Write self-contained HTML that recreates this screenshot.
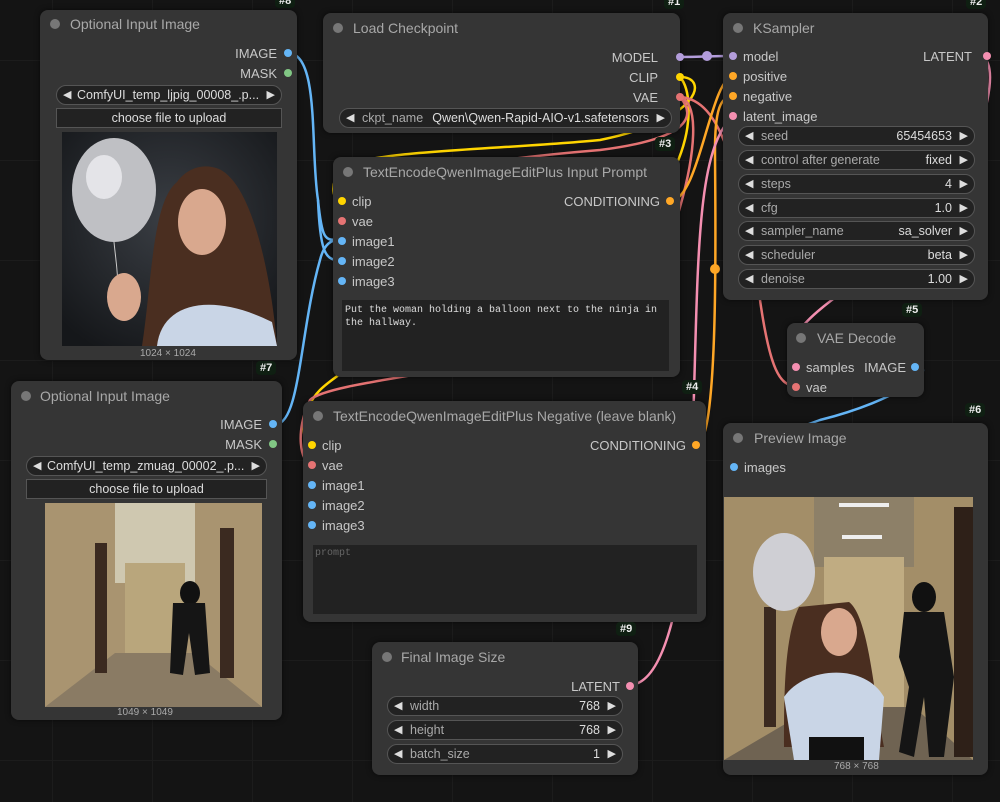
<!DOCTYPE html>
<html><head><meta charset="utf-8"><style>
*{margin:0;padding:0;box-sizing:border-box}
body{width:1000px;height:802px;overflow:hidden;background:#141414;font-family:"Liberation Sans",sans-serif;font-size:13px;color:#c8c8c8;position:relative;
background-image:linear-gradient(#1c1c1c 1px,transparent 1px),linear-gradient(90deg,#1c1c1c 1px,transparent 1px);background-size:100px 100px;background-position:-48px -40px}
.node{position:absolute;background:#353535;border-radius:8px;box-shadow:0 0 6px rgba(0,0,0,.6)}
.tt{position:absolute;color:#a8a8a8;font-size:14px;white-space:nowrap}
.dot{position:absolute;width:10px;height:10px;border-radius:50%;background:#777}
.a{position:absolute;white-space:nowrap}
.s{position:absolute;width:8px;height:8px;border-radius:50%}
.w{position:absolute;height:20px;background:#222;border:1px solid #555;border-radius:10px;color:#ccc;font-size:12.5px}
.w .l{position:absolute;left:22px;top:2px;color:#aaa}
.w .v{position:absolute;right:22px;top:2px;color:#ddd}
.w:before{content:"◀";position:absolute;left:6px;top:2px;font-size:11px;color:#ddd}
.w:after{content:"▶";position:absolute;right:6px;top:2px;font-size:11px;color:#ddd}
.btn{position:absolute;height:20px;background:#222;border:1px solid #555;color:#ddd;text-align:center;font-size:12.5px;line-height:18px}
.badge{position:absolute;background:#0f1f12;color:#eee;font-size:11px;font-weight:bold;padding:1px 4px;border-radius:4px}
.cap{position:absolute;font-size:10px;color:#aaa}
</style></head><body>

<svg width="1000" height="802" style="position:absolute;left:0;top:0" fill="none" stroke-width="2.5">
<path d="M288 53 C320 53 310 150 318 200 C322 240 325 240 338 240" stroke="#64b5f6"/>
<path d="M318 200 C320 250 325 260 338 260" stroke="#64b5f6"/>
<path d="M276 424 C300 424 300 330 320 260 C325 240 335 240 338 240" stroke="#64b5f6"/>
<path d="M916 367 C940 367 900 400 820 420 C760 440 740 466 734 466" stroke="#64b5f6"/>
<path d="M680 57 C705 57 705 56 734 56" stroke="#b39ddb"/>
<path d="M680 77 C710 77 700 120 600 140 C500 150 360 150 340 170 C330 185 332 201 342 201" stroke="#ffd500"/>
<path d="M680 77 C700 100 690 200 600 240 C450 300 340 370 320 390 C300 410 300 444 312 444" stroke="#ffd500"/>
<path d="M680 97 C700 120 680 140 600 150 C480 160 350 180 340 200 C335 215 338 221 342 221" stroke="#e57373"/>
<path d="M680 97 C720 110 660 300 620 330 C500 370 330 380 310 400 C295 430 300 464 312 464" stroke="#e57373"/>
<path d="M680 97 C730 100 740 200 760 300 C770 370 780 386 796 386" stroke="#e57373"/>
<path d="M670 201 C700 201 710 76 734 76" stroke="#ffa726"/>
<path d="M697 444 C720 444 715 200 715 150 C715 110 720 96 734 96" stroke="#ffa726"/>
<path d="M629 685 C660 685 680 620 690 500 C700 300 690 150 734 116" stroke="#f48fb1" />
<path d="M980 56 C1000 60 990 120 950 200 C900 260 820 300 800 330 C790 350 790 367 796 367" stroke="#f48fb1"/>
<circle cx="715" cy="269" r="5" fill="#ffa726" stroke="none"/>
<circle cx="707" cy="56" r="5" fill="#b39ddb" stroke="none"/>
</svg>

<!-- Node #8 -->
<div class="badge" style="left:275px;top:-6px">#8</div>
<div class="node" style="left:40px;top:10px;width:257px;height:350px">
<div class="dot" style="left:10px;top:9px"></div><div class="tt" style="left:30px;top:6px">Optional Input Image</div>
<div class="a" style="right:20px;top:36px">IMAGE</div><div class="s" style="right:5px;top:39px;background:#64b5f6"></div>
<div class="a" style="right:20px;top:56px">MASK</div><div class="s" style="right:5px;top:59px;background:#81c784"></div>
<div class="w" style="left:16px;top:75px;width:226px"><span class="l" style="color:#ddd;left:20px">ComfyUI_temp_ljpig_00008_.p...</span></div>
<div class="btn" style="left:16px;top:98px;width:226px">choose file to upload</div>
<svg style="position:absolute;left:22px;top:122px" width="215" height="214"><defs><radialGradient id="bg" cx="0.5" cy="0.4" r="0.7"><stop offset="0" stop-color="#3a3e44"/><stop offset="1" stop-color="#15171a"/></radialGradient></defs>
<rect width="215" height="214" fill="url(#bg)"/>
<path d="M115 50 C90 70 90 150 80 214 L215 214 C210 150 190 40 150 35 C135 32 122 40 115 50Z" fill="#4a2e20"/>
<path d="M95 214 C100 170 150 160 210 190 L215 214Z" fill="#c9d5e6"/>
<ellipse cx="140" cy="90" rx="24" ry="33" fill="#d9a88e"/>
<ellipse cx="52" cy="58" rx="42" ry="52" fill="#bfc0c4"/><ellipse cx="42" cy="45" rx="18" ry="22" fill="#e4e4e8"/>
<path d="M52 110 C54 130 56 140 56 160" stroke="#ccc"/>
<ellipse cx="62" cy="165" rx="17" ry="24" fill="#d9a88e"/></svg>
<div class="cap" style="left:100px;top:338px">1024 × 1024</div>
</div>

<!-- Load Checkpoint #1 -->
<div class="badge" style="left:664px;top:-5px">#1</div>
<div class="node" style="left:323px;top:13px;width:357px;height:120px">
<div class="dot" style="left:10px;top:10px"></div><div class="tt" style="left:30px;top:7px">Load Checkpoint</div>
<div class="a" style="right:22px;top:37px">MODEL</div><div class="s" style="right:-4px;top:40px;background:#b39ddb"></div>
<div class="a" style="right:22px;top:57px">CLIP</div><div class="s" style="right:-4px;top:60px;background:#ffd500"></div>
<div class="a" style="right:22px;top:77px">VAE</div><div class="s" style="right:-4px;top:80px;background:#e57373"></div>
<div class="w" style="left:16px;top:95px;width:333px"><span class="l">ckpt_name</span><span class="v">Qwen\Qwen-Rapid-AIO-v1.safetensors</span></div>
</div>

<!-- KSampler #2 -->
<div class="badge" style="left:966px;top:-5px">#2</div>
<div class="node" style="left:723px;top:13px;width:265px;height:287px">
<div class="dot" style="left:10px;top:10px"></div><div class="tt" style="left:30px;top:7px">KSampler</div>
<div class="s" style="left:6px;top:39px;background:#b39ddb"></div><div class="a" style="left:20px;top:36px">model</div>
<div class="s" style="left:6px;top:59px;background:#ffa726"></div><div class="a" style="left:20px;top:56px">positive</div>
<div class="s" style="left:6px;top:79px;background:#ffa726"></div><div class="a" style="left:20px;top:76px">negative</div>
<div class="s" style="left:6px;top:99px;background:#f48fb1"></div><div class="a" style="left:20px;top:96px">latent_image</div>
<div class="a" style="right:16px;top:36px">LATENT</div><div class="s" style="right:-3px;top:39px;background:#f48fb1"></div>
<div class="w" style="left:15px;top:113px;width:237px"><span class="l">seed</span><span class="v">65454653</span></div>
<div class="w" style="left:15px;top:137px;width:237px"><span class="l">control after generate</span><span class="v">fixed</span></div>
<div class="w" style="left:15px;top:161px;width:237px"><span class="l">steps</span><span class="v">4</span></div>
<div class="w" style="left:15px;top:185px;width:237px"><span class="l">cfg</span><span class="v">1.0</span></div>
<div class="w" style="left:15px;top:208px;width:237px"><span class="l">sampler_name</span><span class="v">sa_solver</span></div>
<div class="w" style="left:15px;top:232px;width:237px"><span class="l">scheduler</span><span class="v">beta</span></div>
<div class="w" style="left:15px;top:256px;width:237px"><span class="l">denoise</span><span class="v">1.00</span></div>
</div>

<!-- TextEncode #3 -->
<div class="badge" style="left:655px;top:137px">#3</div>
<div class="node" style="left:333px;top:157px;width:347px;height:220px">
<div class="dot" style="left:10px;top:10px"></div><div class="tt" style="left:30px;top:7px">TextEncodeQwenImageEditPlus Input Prompt</div>
<div class="s" style="left:5px;top:40px;background:#ffd500"></div><div class="a" style="left:19px;top:37px">clip</div>
<div class="s" style="left:5px;top:60px;background:#e57373"></div><div class="a" style="left:19px;top:57px">vae</div>
<div class="s" style="left:5px;top:80px;background:#64b5f6"></div><div class="a" style="left:19px;top:77px">image1</div>
<div class="s" style="left:5px;top:100px;background:#64b5f6"></div><div class="a" style="left:19px;top:97px">image2</div>
<div class="s" style="left:5px;top:120px;background:#64b5f6"></div><div class="a" style="left:19px;top:117px">image3</div>
<div class="a" style="right:20px;top:37px">CONDITIONING</div><div class="s" style="right:6px;top:40px;background:#ffa726"></div>
<div style="position:absolute;left:9px;top:143px;width:327px;height:71px;background:#222;font-family:'Liberation Mono',monospace;font-size:10px;color:#ddd;padding:4px 3px;line-height:13px">Put the woman holding a balloon next to the ninja in the hallway.</div>
</div>

<!-- Optional #7 -->
<div class="badge" style="left:256px;top:361px">#7</div>
<div class="node" style="left:11px;top:381px;width:271px;height:339px">
<div class="dot" style="left:10px;top:10px"></div><div class="tt" style="left:29px;top:7px">Optional Input Image</div>
<div class="a" style="right:20px;top:36px">IMAGE</div><div class="s" style="right:5px;top:39px;background:#64b5f6"></div>
<div class="a" style="right:20px;top:56px">MASK</div><div class="s" style="right:5px;top:59px;background:#81c784"></div>
<div class="w" style="left:15px;top:75px;width:241px"><span class="l" style="color:#ddd;left:20px">ComfyUI_temp_zmuag_00002_.p...</span></div>
<div class="btn" style="left:15px;top:98px;width:241px">choose file to upload</div>
<svg style="position:absolute;left:34px;top:122px" width="217" height="204"><rect width="217" height="204" fill="#a99470"/><rect x="70" y="0" width="80" height="80" fill="#cfc8b0"/><rect x="80" y="60" width="60" height="110" fill="#b9a67c"/>
<path d="M0 204 L70 150 L150 150 L217 204Z" fill="#8a7b64"/><rect x="50" y="40" width="12" height="130" fill="#3b2a20"/><rect x="175" y="25" width="14" height="150" fill="#3b2a20"/>
<ellipse cx="145" cy="90" rx="10" ry="12" fill="#111"/><path d="M128 100 L160 100 L165 170 L150 172 L144 130 L138 172 L125 170Z" fill="#151515"/></svg>
<div class="cap" style="left:106px;top:326px">1049 × 1049</div>
</div>

<!-- Negative #4 -->
<div class="badge" style="left:682px;top:380px">#4</div>
<div class="node" style="left:303px;top:401px;width:403px;height:221px">
<div class="dot" style="left:10px;top:10px"></div><div class="tt" style="left:30px;top:7px">TextEncodeQwenImageEditPlus Negative (leave blank)</div>
<div class="s" style="left:5px;top:40px;background:#ffd500"></div><div class="a" style="left:19px;top:37px">clip</div>
<div class="s" style="left:5px;top:60px;background:#e57373"></div><div class="a" style="left:19px;top:57px">vae</div>
<div class="s" style="left:5px;top:80px;background:#64b5f6"></div><div class="a" style="left:19px;top:77px">image1</div>
<div class="s" style="left:5px;top:100px;background:#64b5f6"></div><div class="a" style="left:19px;top:97px">image2</div>
<div class="s" style="left:5px;top:120px;background:#64b5f6"></div><div class="a" style="left:19px;top:117px">image3</div>
<div class="a" style="right:20px;top:37px">CONDITIONING</div><div class="s" style="right:6px;top:40px;background:#ffa726"></div>
<div style="position:absolute;left:10px;top:144px;width:384px;height:69px;background:#222;font-family:'Liberation Mono',monospace;font-size:10px;color:#666;padding:3px 2px">prompt</div>
</div>

<!-- VAE Decode #5 -->
<div class="badge" style="left:902px;top:303px">#5</div>
<div class="node" style="left:787px;top:323px;width:137px;height:74px">
<div class="dot" style="left:9px;top:10px"></div><div class="tt" style="left:30px;top:7px">VAE Decode</div>
<div class="s" style="left:5px;top:40px;background:#f48fb1"></div><div class="a" style="left:19px;top:37px">samples</div>
<div class="s" style="left:5px;top:60px;background:#e57373"></div><div class="a" style="left:19px;top:57px">vae</div>
<div class="a" style="right:18px;top:37px">IMAGE</div><div class="s" style="right:5px;top:40px;background:#64b5f6"></div>
</div>

<!-- Preview #6 -->
<div class="badge" style="left:965px;top:403px">#6</div>
<div class="node" style="left:723px;top:423px;width:265px;height:352px">
<div class="dot" style="left:10px;top:10px"></div><div class="tt" style="left:31px;top:7px">Preview Image</div>
<div class="s" style="left:7px;top:40px;background:#64b5f6"></div><div class="a" style="left:21px;top:37px">images</div>
<svg style="position:absolute;left:1px;top:74px" width="249" height="263"><rect width="249" height="263" fill="#a38e68"/><rect x="90" y="0" width="100" height="70" fill="#8d8068"/><rect x="100" y="60" width="80" height="160" fill="#c0ac82"/>
<path d="M0 263 L90 210 L190 210 L249 263Z" fill="#6f6352"/><rect x="40" y="110" width="12" height="120" fill="#3b2a20"/><rect x="230" y="10" width="19" height="250" fill="#2e2018"/>
<rect x="115" y="6" width="50" height="4" fill="#eee"/><rect x="118" y="38" width="40" height="4" fill="#eee"/>
<ellipse cx="60" cy="75" rx="31" ry="39" fill="#cfcfd4"/><path d="M75 110 C60 140 60 200 60 250 L160 250 C150 200 145 120 125 105Z" fill="#4a2e20"/>
<ellipse cx="115" cy="135" rx="18" ry="24" fill="#d9a88e"/><path d="M60 200 C80 170 140 165 160 200 L155 263 L70 263Z" fill="#c9d5e6"/><rect x="85" y="240" width="55" height="23" fill="#111"/>
<ellipse cx="200" cy="100" rx="12" ry="15" fill="#111"/><path d="M180 115 L220 115 L230 180 L220 260 L205 260 L200 200 L190 260 L175 255 L185 190 L175 160Z" fill="#151515"/></svg>
<div class="cap" style="left:111px;top:338px">768 × 768</div>
</div>

<!-- Final Image Size #9 -->
<div class="badge" style="left:616px;top:622px">#9</div>
<div class="node" style="left:372px;top:642px;width:266px;height:133px">
<div class="dot" style="left:10px;top:10px"></div><div class="tt" style="left:29px;top:7px">Final Image Size</div>
<div class="a" style="right:18px;top:37px">LATENT</div><div class="s" style="right:4px;top:40px;background:#f48fb1"></div>
<div class="w" style="left:15px;top:54px;width:236px"><span class="l">width</span><span class="v">768</span></div>
<div class="w" style="left:15px;top:78px;width:236px"><span class="l">height</span><span class="v">768</span></div>
<div class="w" style="left:15px;top:102px;width:236px"><span class="l">batch_size</span><span class="v">1</span></div>
</div>
</body></html>
